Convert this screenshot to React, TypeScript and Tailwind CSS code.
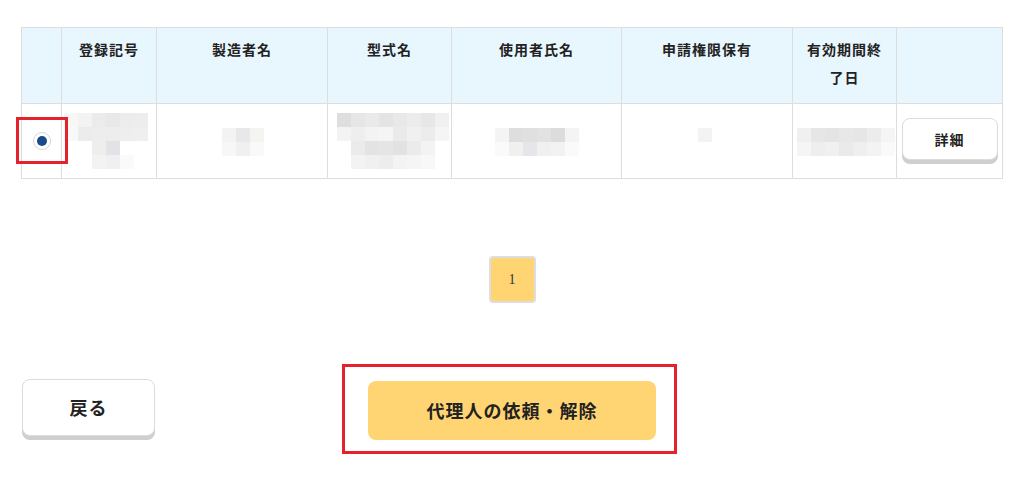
const HEADERS = ["", "登録記号", "製造者名", "型式名", "使用者氏名", "申請権限保有", "有効期間終了日", ""];
const WIDTHS = ["w-[40px]", "w-[95px]", "w-[171px]", "w-[124px]", "w-[170px]", "w-[171px]", "w-[104px]", "w-[106px]"];

// blurred (mosaic) cell contents, "" = empty block
type Mosaic = { left: number; top: number; rows: string[][] };

const MOSAICS: Record<number, Mosaic> = {
  1: {
    left: 2,
    top: 9,
    rows: [
      ["#f9f7f6", "#f3f3f3", "#ebebeb", "#e8e8e8", "#ececec", "#ededed"],
      ["#f8f8f8", "#ececec", "#ededed", "#ededed", "#eeeeee", "#efefef"],
      ["", "", "#efeeec", "#e4e2e9", "", ""],
      ["", "", "#f4f3f3", "#f0f0f3", "#fafafa", ""],
    ],
  },
  2: {
    left: 65,
    top: 24,
    rows: [
      ["#f3f3f3", "#e8e8ea", "#f4f5f0"],
      ["#f7f7f7", "#f0f0f0", "#f9f9f9"],
    ],
  },
  3: {
    left: 9,
    top: 9,
    rows: [
      ["#dedede", "#e6e6e6", "#eaeaea", "#e4e4e4", "#e8e8e8", "#ececec", "#e7e7e7", "#f0f0f0"],
      ["#f3f3f3", "#eeeeee", "#f3f3f3", "#f5f5f5", "#eaeaea", "#f0f0f0", "#ececec", "#f5f5f5"],
      ["", "#ebebeb", "#e3e3e3", "#e5e5e5", "#e2e2e2", "#ebebeb", "#f3f3f3", ""],
      ["", "#f3f3f3", "#f0f0f0", "#ededed", "#f3f3f3", "#f5f5f5", "#f8f8f8", ""],
    ],
  },
  4: {
    left: 43,
    top: 24,
    rows: [
      ["#f4f4f4", "#dedede", "#e0e0e0", "#e2e2e4", "#dcdcdc", "#f4f4f4"],
      ["#fafafa", "#f0f0f0", "#e6e6ea", "#f0f0f0", "#f2f2f2", "#fafafa"],
    ],
  },
  5: {
    left: 76,
    top: 24,
    rows: [["#f3f3f3"]],
  },
  6: {
    left: 4,
    top: 24,
    rows: [
      ["#f0f0f0", "#e6e6e6", "#e4e4e4", "#e8e8e8", "#e6e6e6", "#ececec", "#f5f5f5"],
      ["#f5f5f5", "#eeeeee", "#f0f0f0", "#eaeaea", "#efefef", "#f3f3f3", "#fafafa"],
    ],
  },
};

function MosaicBlock({ m }: { m: Mosaic }) {
  return (
    <div className="h-[74px] flex flex-col" style={{ paddingLeft: m.left, paddingTop: m.top }}>
      {m.rows.map((row, i) => (
        <div key={i} className="flex">
          {row.map((c, j) => (
            <div key={j} className="w-[14px] h-[14px]" style={{ backgroundColor: c || "transparent" }} />
          ))}
        </div>
      ))}
    </div>
  );
}

function RaisedButton({ label, className }: { label: string; className: string }) {
  return (
    <button
      className={`flex items-center justify-center rounded-[8px] border border-[#dcdcdc] bg-white font-bold text-[#222] shadow-[0_4px_0_#cfcfcf] ${className}`}
    >
      {label}
    </button>
  );
}

export default function App() {
  return (
    <div
      className="w-[1024px] h-[481px] bg-white overflow-hidden pt-[27px] text-[#222]"
      style={{ fontFamily: '"Noto Sans CJK JP", "Noto Sans", sans-serif' }}
    >
      <div className="px-[21px]">
        <table className="table-fixed border-collapse w-[982px]">
          <thead>
            <tr className="h-[76px] bg-[#e8f6fe]">
              {HEADERS.map((h, i) => (
                <th
                  key={i}
                  className={`${WIDTHS[i]} border border-[#dddddd] align-top px-[10px] pt-[7px] text-center text-[14px] leading-[28px] tracking-[1px] font-bold text-[#222]`}
                >
                  {h}
                </th>
              ))}
            </tr>
          </thead>
          <tbody>
            <tr className="h-[75px]">
              <td className="border border-[#dddddd] align-middle p-0">
                <div className="relative h-[74px] flex items-center justify-center">
                  <div className="w-[18px] h-[18px] rounded-full border border-[#d6d6d6] bg-white flex items-center justify-center">
                    <div className="w-[10px] h-[10px] rounded-full bg-[#1b4a8c]" />
                  </div>
                  {/* highlight annotation */}
                  <div className="absolute left-[-6px] top-[13px] w-[52px] h-[47px] border-[3px] border-[#e5222b]" />
                </div>
              </td>
              {[1, 2, 3, 4, 5, 6].map((i) => (
                <td key={i} className="border border-[#dddddd] align-top p-0">
                  <MosaicBlock m={MOSAICS[i]} />
                </td>
              ))}
              <td className="border border-[#dddddd] align-middle p-0">
                <div className="flex justify-center">
                  <RaisedButton label="詳細" className="w-[96px] h-[42px] -mt-[4px] text-[14px] tracking-[1px]" />
                </div>
              </td>
            </tr>
          </tbody>
        </table>
      </div>

      <div className="flex justify-center mt-[77px]">
        <div
          className="w-[47px] h-[47px] rounded-[4px] border-2 border-[#dedede] bg-[#ffd473] flex items-center justify-center text-[14px] text-[#333]"
          style={{ fontFamily: '"Liberation Serif", serif' }}
        >
          1
        </div>
      </div>

      <div className="flex items-center mt-[61px] pl-[22px]">
        <RaisedButton label="戻る" className="w-[133px] h-[57px] -mt-[4px] text-[18px] tracking-[1px]" />
        <div className="ml-[187px] w-[335px] h-[90px] border-[3px] border-[#e5222b] pl-[23px] pt-[14px]">
          <button className="w-[288px] h-[59px] rounded-[8px] bg-[#ffd473] font-bold text-[18px] tracking-[1px] text-[#222]">
            代理人の依頼・解除
          </button>
        </div>
      </div>
    </div>
  );
}
